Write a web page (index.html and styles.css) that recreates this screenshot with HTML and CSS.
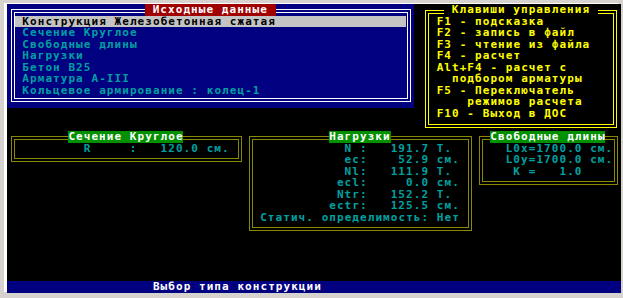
FILE: index.html
```html
<!doctype html>
<html>

<head>
    <meta charset="utf8">
    <title>Исходные данные</title>
    <link rel="stylesheet" href="styles.css">
</head>

<body>
    <div class="screen">

        <!-- исходные данные -->
        <section class="win win-main">
            <div class="frame"></div>
            <h2 class="title">Исходные данные</h2>
            <ul class="menu">
                <li class="active">Конструкция Железобетонная сжатая</li>
                <li>Сечение Круглое</li>
                <li>Свободные длины</li>
                <li>Нагрузки</li>
                <li>Бетон B25</li>
                <li>Арматура A-III</li>
                <li>Кольцевое армирование : колец-1</li>
            </ul>
        </section>

        <!-- клавиши -->
        <section class="win win-keys">
            <div class="frame"></div>
            <h2 class="title">Клавиши управления</h2>
            <div class="keys">
                <p>F1 - подсказка</p>
                <p>F2 - запись в файл</p>
                <p>F3 - чтение из файла</p>
                <p>F4 - расчет</p>
                <p>Alt+F4 - расчет с</p>
                <p class="ind1">подбором арматуры</p>
                <p>F5 - Переключатель</p>
                <p class="ind2">режимов расчета</p>
                <p>F10 - Выход в ДОС</p>
            </div>
        </section>

        <!-- сечение -->
        <section class="win win-sec">
            <div class="frame"></div>
            <h2 class="title">Сечение Круглое</h2>
            <div class="data">
                <p>R     :   120.0 см.</p>
            </div>
        </section>

        <!-- нагрузки -->
        <section class="win win-loads">
            <div class="frame"></div>
            <h2 class="title">Нагрузки</h2>
            <div class="data">
                <p>  N :   191.7 Т.</p>
                <p>  ec:    52.9 см.</p>
                <p>  Nl:   111.9 Т.</p>
                <p> ecl:     0.0 см.</p>
                <p> Ntr:   152.2 Т.</p>
                <p>ectr:   125.5 см.</p>
            </div>
            <p class="note">Статич. определимость: Нет</p>
        </section>

        <!-- свободные длины -->
        <section class="win win-free">
            <div class="frame"></div>
            <h2 class="title">Свободные длины</h2>
            <div class="data">
                <p>L0x=1700.0 см.</p>
                <p>L0y=1700.0 см.</p>
                <p> K =   1.0</p>
            </div>
        </section>

        <div class="status">Выбор типа конструкции</div>
    </div>
</body>

</html>
```

FILE: styles.css
```css
* {
    margin: 0;
    padding: 0;
    font-size: inherit;
    font-weight: inherit;
}

html,
body {
    background-color: #d6d3ce;
    overflow: hidden;
}

/* 80x25 текстовый экран */
.screen {
    --cw: 7.68px;
    --rh: 11.55px;
    display: grid;
    grid-template-columns: repeat(80, var(--cw));
    grid-template-rows: repeat(25, var(--rh));
    width: calc(80 * var(--cw));
    margin: 4px 0 0 7px;
    background-color: #000;
    box-shadow: -3px -1px 0 #fff;
    font-family: "DejaVu Sans Mono", monospace;
    font-weight: bold;
    font-size: 11px;
    letter-spacing: 1.06px;
    line-height: var(--rh);
    white-space: pre;
}

.win {
    display: grid;
    grid-template-columns: subgrid;
    grid-template-rows: subgrid;
}

.frame {
    grid-column: 1 / -1;
    grid-row: 1 / -1;
    border: 4px double;
    margin: 5px 3px 4px 4px;
}

.title {
    grid-row: 1;
    text-align: center;
}

.data {
    display: grid;
    grid-template-rows: subgrid;
}

/* исходные данные */
.win-main {
    grid-column: 1 / 54;
    grid-row: 1 / 10;
    background-color: #000080;
}

.win-main .frame {
    border-color: #fff;
    margin-bottom: 6px;
}

.win-main .title {
    grid-column: 19 / 36;
    background-color: #a00000;
    color: #fff;
}

.menu {
    grid-column: 2 / 53;
    grid-row: 2 / 9;
    display: grid;
    grid-template-rows: subgrid;
    list-style: none;
    color: #00a0a0;
}

.menu li {
    padding-left: var(--cw);
}

.menu .active {
    background-color: #c4c4c4;
    color: #000;
}

/* клавиши */
.win-keys {
    grid-column: 55 / 81;
    grid-row: 1 / 12;
    color: #ffff00;
}

.win-keys .frame {
    border-color: #ffff00;
    margin: 6px 4px 3px 4px;
}

.win-keys .title {
    grid-column: 4 / 24;
    background-color: #000;
}

.keys {
    grid-column: 3 / -1;
    grid-row: 2 / 11;
    display: grid;
    grid-template-rows: subgrid;
}

.ind1 { padding-left: calc(2 * var(--cw)); }
.ind2 { padding-left: calc(4 * var(--cw)); }

/* нижние окна */
.win-sec,
.win-loads,
.win-free {
    color: #00a0a0;
}

.win-sec .frame,
.win-loads .frame,
.win-free .frame {
    border-color: #8a8a00;
}

.win-sec .title,
.win-loads .title,
.win-free .title {
    background-color: #009000;
    color: #fff;
}

.win-sec {
    grid-column: 1 / 32;
    grid-row: 12 / 15;
}

.win-sec .title { grid-column: 9 / 24; }
.win-sec .data { grid-column: 11 / -2; grid-row: 2 / 3; }

.win-loads {
    grid-column: 32 / 62;
    grid-row: 12 / 21;
}

.win-loads .title { grid-column: 12 / 20; }
.win-loads .data { grid-column: 12 / -2; grid-row: 2 / 8; }

.note {
    grid-column: 3 / -2;
    grid-row: 8;
}

.win-free {
    grid-column: 62 / 81;
    grid-row: 12 / 17;
}

.win-free .title { grid-column: 3 / 18; }
.win-free .data { grid-column: 5 / -1; grid-row: 2 / 5; }

.status {
    grid-column: 1 / -1;
    grid-row: 25;
    background-color: #000080;
    color: #fff;
    padding-left: calc(19 * var(--cw));
}
```
